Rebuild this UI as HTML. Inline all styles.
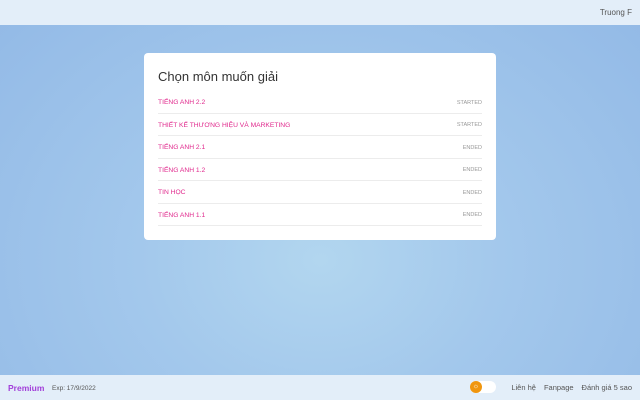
<!DOCTYPE html>
<html><head><meta charset="utf-8"><style>
*{margin:0;padding:0;box-sizing:border-box}
body{width:640px;height:400px;overflow:hidden;font-family:"Liberation Sans",sans-serif;background:radial-gradient(ellipse at 50% 65%,#b2d6ef 0%,#a3c8ec 40%,#92b9e6 100%);position:relative}
.top{position:absolute;top:0;left:0;width:640px;height:25px;background:#e3eef9;color:#555;font-size:8px;text-align:right;padding:8px 8px 0 0}
.card{position:absolute;left:144px;top:53px;width:352px;height:187px;background:#fff;border-radius:4px;padding:0 14px}
h1{font-weight:normal;font-size:13px;color:#333;margin-top:16px;margin-bottom:7px}
.row{height:22.5px;border-bottom:1px solid #ececec;display:flex;justify-content:space-between;align-items:center;font-size:6.7px;padding-top:2px}
.row span:first-child{color:#e0288c}
.row span:last-child{color:#999;font-size:5.5px}
.bot{position:absolute;left:0;top:375px;width:640px;height:25px;background:#e3eef9;font-size:7px;color:#555}
.prem{position:absolute;left:8px;top:8px;font-weight:bold;font-size:8.5px;color:#a23fd9}
.exp{position:absolute;left:52px;top:9.5px;font-size:6.5px}
.tog{position:absolute;left:470px;top:6px;width:26px;height:12px;border-radius:6px;background:#fff}
.sun{position:absolute;left:0;top:0;width:12px;height:12px;border-radius:50%;background:#f0960f;color:#fff;font-size:7px;text-align:center;line-height:12px}
.links{position:absolute;right:8px;top:8px;font-size:7.5px}
.links span{margin-left:8px}
</style></head><body>
<div class="top">Truong F</div>
<div class="card">
<h1>Chọn môn muốn giải</h1>
<div class="row"><span>TIẾNG ANH 2.2</span><span>STARTED</span></div>
<div class="row"><span>THIẾT KẾ THƯƠNG HIỆU VÀ MARKETING</span><span>STARTED</span></div>
<div class="row"><span>TIẾNG ANH 2.1</span><span>ENDED</span></div>
<div class="row"><span>TIẾNG ANH 1.2</span><span>ENDED</span></div>
<div class="row"><span>TIN HỌC</span><span>ENDED</span></div>
<div class="row"><span>TIẾNG ANH 1.1</span><span>ENDED</span></div>
</div>
<div class="bot">
<div class="prem">Premium</div><div class="exp">Exp: 17/9/2022</div>
<div class="tog"><div class="sun">☼</div></div>
<div class="links"><span>Liên hệ</span><span>Fanpage</span><span>Đánh giá 5 sao</span></div>
</div>
</body></html>
